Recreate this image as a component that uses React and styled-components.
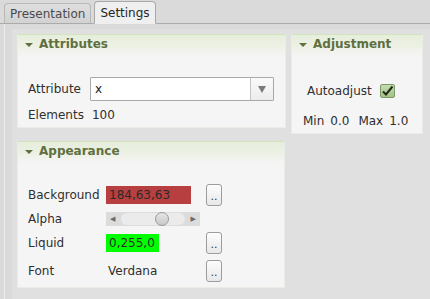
import React from 'react';
import styled, { createGlobalStyle } from 'styled-components';

const GlobalStyle = createGlobalStyle`
  html, body {
    margin: 0;
    padding: 0;
    background: #dadada;
  }
  body {
    font-family: "DejaVu Sans", Verdana, sans-serif;
    font-size: 12px;
    color: #2f2f2f;
  }
`;

const Window = styled.div`
  width: 430px;
  height: 299px;
  overflow: hidden;
  background: #dadada;
  display: flex;
  flex-direction: column;
`;

const TabBar = styled.div`
  height: 23px;
  display: flex;
  align-items: flex-end;
  gap: 3px;
  padding-left: 4px;
  border-bottom: 1px solid #ababab;
`;

const Tab = styled.div`
  box-sizing: border-box;
  height: ${p => (p.$active ? 23 : 20)}px;
  margin-bottom: ${p => (p.$active ? -1 : 0)}px;
  padding: 0 5px;
  display: flex;
  align-items: center;
  font-size: 12px;
  color: ${p => (p.$active ? '#262626' : '#4a4a4a')};
  background: ${p => (p.$active ? '#efefef' : 'linear-gradient(#dedede, #d2d2d2)')};
  border: 1px solid ${p => (p.$active ? '#a8a8a8' : '#b8b8b8')};
  border-bottom: ${p => (p.$active ? '1px solid #efefef' : 'none')};
  border-radius: 4px 4px 0 0;
`;

const Pane = styled.div`
  flex: 1;
  display: flex;
  padding-left: 4px;
`;

const PaneInner = styled.div`
  flex: 1;
  display: flex;
  border-left: 1px solid #ececec;
  padding: 5px 0 0 7px;
`;

const ScrollArea = styled.div`
  flex: 1;
  display: flex;
  align-items: flex-start;
  gap: 5px;
  padding: 5px 0 0 5px;
  background: #e0e0e0;
`;

const Column = styled.div`
  display: flex;
  flex-direction: column;
  gap: 13px;
`;

const Group = styled.section`
  box-sizing: border-box;
  width: ${p => p.$width}px;
  background: #f5f5f5;
  border: 1px solid #eaede6;
  border-top-color: #d3e3bf;
  border-radius: 1px;
`;

const GroupHeader = styled.div`
  height: 18px;
  display: flex;
  align-items: center;
  gap: 6px;
  padding-left: 7px;
  background: linear-gradient(#e6eedb, #edf1e6 70%, #f3f4f1);
  font-weight: bold;
  font-size: 12px;
  color: #5f6f40;
`;

const Arrow = styled.span`
  width: 0;
  height: 0;
  border-left: 4px solid transparent;
  border-right: 4px solid transparent;
  border-top: 4px solid #5f6f40;
  margin-top: 1px;
`;

const Body = styled.div`
  padding: ${p => p.$pad};
  background: linear-gradient(#f3f4f1, #f5f5f5 6px);
`;

const FormGrid = styled.div`
  display: grid;
  grid-template-columns: ${p => p.$cols};
  grid-template-rows: ${p => p.$rows || 'none'};
  column-gap: ${p => p.$colGap}px;
  row-gap: ${p => p.$rowGap}px;
  align-items: center;
`;

const Label = styled.span`
  white-space: nowrap;
`;

const Value = styled.span`
  padding-left: 2px;
  white-space: nowrap;
`;

const Combo = styled.div`
  box-sizing: border-box;
  height: 24px;
  display: flex;
  background: #ffffff;
  border: 1px solid #a9a9a9;
  border-radius: 1px;
`;

const ComboText = styled.div`
  flex: 1;
  display: flex;
  align-items: center;
  padding-left: 4px;
  color: #202020;
`;

const ComboButton = styled.div`
  width: 22px;
  display: flex;
  align-items: center;
  justify-content: center;
  border-left: 1px solid #c4c4c4;
  background: linear-gradient(#fafafa, #ececec);
  &:after {
    content: '';
    border-left: 4px solid transparent;
    border-right: 4px solid transparent;
    border-top: 7px solid #7a7a7a;
  }
`;

const CheckRow = styled.div`
  display: flex;
  align-items: center;
  gap: 8px;
  padding-left: 4px;
`;

const CheckBox = styled.span`
  box-sizing: border-box;
  width: 15px;
  height: 14px;
  display: flex;
  align-items: center;
  justify-content: center;
  background: linear-gradient(#c4dcae, #a3c488);
  border: 1px solid #7c9868;
  border-radius: 2px;
`;

const RangeRow = styled.div`
  display: flex;
  align-items: center;
  gap: 6px;
  margin-top: 16px;
  line-height: 14px;
`;

const RangeLabel = styled.span`
  margin-left: ${p => p.$shift || 0}px;
`;

const ColorSwatch = styled.div`
  box-sizing: border-box;
  width: ${p => p.$width}px;
  height: 18px;
  display: flex;
  align-items: center;
  padding-left: 3px;
  background: ${p => p.$color};
  color: #2a2a2a;
`;

const DotsButton = styled.button`
  box-sizing: border-box;
  width: 16px;
  height: 22px;
  padding: 0 0 3px;
  display: flex;
  align-items: flex-end;
  justify-content: center;
  font-family: inherit;
  font-size: 11px;
  line-height: 1;
  color: #333;
  background: linear-gradient(#fdfdfd, #e8e8e8);
  border: 1px solid #9c9c9c;
  border-radius: 3px;
`;

const Slider = styled.div`
  box-sizing: border-box;
  width: 94px;
  height: 14px;
  display: flex;
  align-items: center;
  justify-content: space-between;
  padding: 0 4px;
  background: #dcdcdc;
  font-size: 7px;
  color: #6a6a6a;
`;

const Groove = styled.div`
  flex: 1;
  height: 12px;
  margin: 0 6px;
  border-radius: 6px;
  background: #ebebeb;
  display: flex;
  align-items: center;
`;

const Handle = styled.span`
  box-sizing: border-box;
  width: 14px;
  height: 14px;
  border-radius: 50%;
  border: 1px solid #9a9a9a;
  background: linear-gradient(#e6e6e6, #c8c8c8);
`;

const Check = () => (
  <svg width="13" height="12" viewBox="0 0 13 12">
    <path d="M2 6.5 L5 9.5 L11.5 1.5" fill="none" stroke="#1f2a18" strokeWidth="2" />
  </svg>
);

export default function App() {
  const alpha = 0.55;
  return (
    <Window>
      <GlobalStyle />
      <TabBar>
        <Tab>Presentation</Tab>
        <Tab $active>Settings</Tab>
      </TabBar>
      <Pane>
        <PaneInner>
          <ScrollArea>
            <Column>
              <Group $width={269}>
                <GroupHeader><Arrow />Attributes</GroupHeader>
                <Body $pad="24px 11px 5px 10px">
                  <FormGrid $cols="auto 1fr" $colGap={6} $rowGap={7}>
                    <Label>Attribute</Label>
                    <Combo>
                      <ComboText>x</ComboText>
                      <ComboButton />
                    </Combo>
                    <Label>Elements</Label>
                    <Value>100</Value>
                  </FormGrid>
                </Body>
              </Group>
              <Group $width={268}>
                <GroupHeader><Arrow />Appearance</GroupHeader>
                <Body $pad="24px 10px 5px 10px">
                  <FormGrid $cols="78px 100px auto" $rows="21px 15px 22px 22px" $colGap={0} $rowGap={6}>
                    <Label>Background</Label>
                    <ColorSwatch $color="rgb(184,63,63)" $width={85}>184,63,63</ColorSwatch>
                    <DotsButton>..</DotsButton>
                    <Label>Alpha</Label>
                    <Slider>
                      <span>◀</span>
                      <Groove style={{ paddingLeft: Math.round(alpha * 62) }}><Handle /></Groove>
                      <span>▶</span>
                    </Slider>
                    <span />
                    <Label>Liquid</Label>
                    <ColorSwatch $color="#00ff00" $width={53}>0,255,0</ColorSwatch>
                    <DotsButton>..</DotsButton>
                    <Label>Font</Label>
                    <Value>Verdana</Value>
                    <DotsButton>..</DotsButton>
                  </FormGrid>
                </Body>
              </Group>
            </Column>
            <Group $width={132}>
              <GroupHeader><Arrow />Adjustment</GroupHeader>
              <Body $pad="31px 8px 5px 11px">
                <CheckRow>
                  <span>Autoadjust</span>
                  <CheckBox><Check /></CheckBox>
                </CheckRow>
                <RangeRow>
                  <span>Min</span>
                  <span>0.0</span>
                  <RangeLabel $shift={3}>Max</RangeLabel>
                  <span>1.0</span>
                </RangeRow>
              </Body>
            </Group>
          </ScrollArea>
        </PaneInner>
      </Pane>
    </Window>
  );
}
